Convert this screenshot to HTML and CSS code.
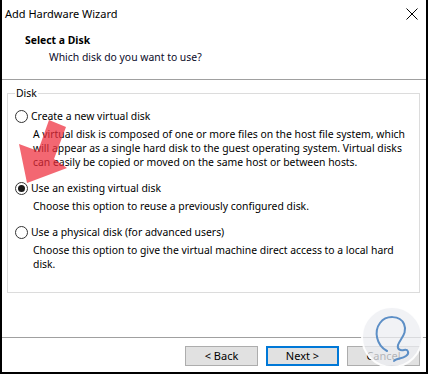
FILE: index.html
```html
<!doctype html>
<html lang="en">
	<head>
		<meta charset="UTF-8" />
		<title>Add Hardware Wizard</title>
		<link rel="stylesheet" href="styles.css">
	</head>
	<body>
		<div class="window">
			<div class="titlebar">
				<span>Add Hardware Wizard</span>
				<svg class="close" width="12" height="12" viewBox="0 0 12 12">
					<path d="M0.5 0.5 L11.5 11.5 M11.5 0.5 L0.5 11.5" stroke="#000" stroke-width="1" fill="none" />
				</svg>
			</div>

			<header class="header">
				<div class="header-title">Select a Disk</div>
				<div class="header-sub">Which disk do you want to use?</div>
			</header>
			<div class="rule"></div>

			<main class="content">
				<fieldset class="group">
					<legend>Disk</legend>

					<div class="option">
						<span class="radio"></span>
						<span>Create a new virtual disk</span>
					</div>
					<p class="desc">
						A virtual disk is composed of one or more files on the host file system, which<br />
						will appear as a single hard disk to the guest operating system. Virtual disks<br />
						can easily be copied or moved on the same host or between hosts.
					</p>

					<div class="option">
						<span class="radio checked"></span>
						<span>Use an existing virtual disk</span>
					</div>
					<p class="desc">Choose this option to reuse a previously configured disk.</p>

					<div class="option">
						<span class="radio"></span>
						<span>Use a physical disk (for advanced users)</span>
					</div>
					<p class="desc">
						Choose this option to give the virtual machine direct access to a local hard<br />
						disk.
					</p>
				</fieldset>
			</main>

			<footer class="footer">
				<button class="btn">&lt; Back</button>
				<button class="btn btn-default">Next &gt;</button>
				<button class="btn">Cancel</button>
			</footer>

			<!-- callout arrow drawn over the dialog -->
			<svg class="arrow" width="80" height="200" viewBox="0 0 80 200">
				<polygon points="47,120 64,127 52,159 65,168 25,183 17,144 36,151" fill="rgba(238,45,60,0.72)" />
			</svg>

			<svg class="watermark" width="64" height="64" viewBox="0 0 64 64">
				<circle cx="32" cy="32" r="30" fill="rgba(236,238,242,0.75)" stroke="rgba(255,255,255,0.9)" stroke-width="2" />
				<path
					d="M27 46 C16 40 14 26 20 18 C26 10 40 10 44 19 C48 28 40 34 38 40 C37 44 40 46 44 45 C48 44 50 48 46 51 C42 54 36 53 34 56"
					fill="none"
					stroke="#5d8fc6"
					stroke-width="2"
					stroke-linecap="round"
				/>
			</svg>
		</div>
	</body>
</html>
```

FILE: styles.css
```css
body {
	margin: 0;
	background: #fff;
	color: #000;
	font-family: 'Noto Sans', 'Open Sans', sans-serif;
	font-size: 10.4px;
	line-height: 14px;
}

.window {
	position: relative;
	width: 428px;
	height: 374px;
	box-sizing: border-box;
	display: flex;
	flex-direction: column;
	overflow: hidden;

	border: 2px solid #000;
	border-top: none;
	background: #fff;
}

.titlebar {
	height: 27px;
	padding: 0 8px 0 3px;
	display: flex;
	align-items: center;
	justify-content: space-between;
	font-size: 11px;
}

.header {
	height: 52px;
	box-sizing: border-box;
	padding: 6px 0 0 23px;
}

.header-title {
	font-weight: 700;
	line-height: 15px;
}

.header-sub {
	margin-top: 2px;
	padding-left: 24px;
	line-height: 15px;
	color: #0a0a28;
}

.rule {
	height: 1px;
	background: #a0a0a0;
}

.content {
	flex: 1;
}

.group {
	margin: 6px 6px 0 5px;
	padding: 0 6px 21px 7px;
	border: 1px solid #dcdcdc;
}

.group legend {
	padding: 0 1px;
	line-height: 14px;
}

.option {
	display: flex;
	align-items: center;
	gap: 3px;
	margin-top: 12px;
	height: 14px;
}

.option:first-of-type {
	margin-top: 9px;
}

.radio {
	width: 13px;
	height: 13px;
	box-sizing: border-box;
	border: 1px solid #333;
	border-radius: 50%;
	display: flex;
	align-items: center;
	justify-content: center;
}

.radio.checked::after {
	content: '';
	width: 7px;
	height: 7px;
	border-radius: 50%;
	background: #1a1a1a;
}

.desc {
	margin: 4px 0 0 18px;
	white-space: nowrap;
}

.footer {
	height: 35px;
	box-sizing: border-box;
	padding: 8px 6px 0 0;
	border-top: 1px solid #a0a0a0;
	display: flex;
	justify-content: flex-end;
	align-items: flex-start;
	gap: 8px;
}

.btn {
	width: 73px;
	height: 20px;
	padding: 0;
	box-sizing: border-box;

	border: 1px solid #adadad;
	background: #e1e1e1;
	color: #000;

	font-family: inherit;
	font-size: 11px;
	line-height: 16px;
}

.btn-default {
	border: 2px solid #0078d7;
}

/* Overlays */

.arrow {
	position: absolute;
	left: 0;
	top: 0;
	pointer-events: none;
}

.watermark {
	position: absolute;
	left: 358px;
	top: 305px;
	pointer-events: none;
}
```
